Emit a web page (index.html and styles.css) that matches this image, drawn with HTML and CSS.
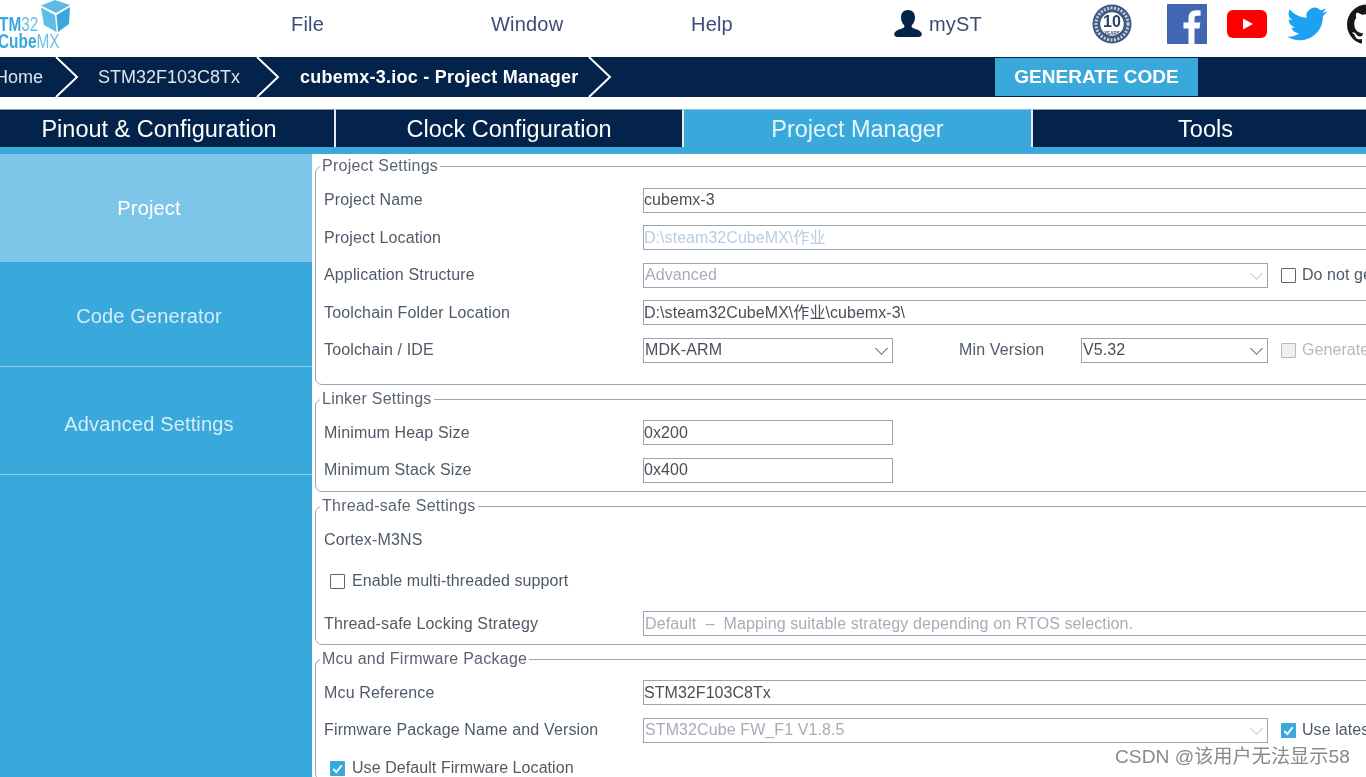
FILE: index.html
```html
<!DOCTYPE html>
<html lang="en">

<head>
    <meta charset="utf-8">
    <title>STM32CubeMX cubemx-3.ioc - Project Manager</title>
    <link rel="stylesheet" href="styles.css">
</head>

<body>
    <!--top menu-->
    <header class="topbar">
        <div class="logo">
            <div class="logo-text">
                <span class="logo-line logo-line-first"><span class="logo-bold">STM</span>32</span>
                <span class="logo-line"><span class="logo-bold">Cube</span>MX</span>
            </div>
            <svg class="logo-cube" viewBox="0 0 30 32">
                <path fill="#5dbbe6" d="M0 5.500 14 0 29 5 15 13Z" />
                <path fill="#5fbce7" d="M0 7.500 14 15 15.500 32 3 25Z" />
                <path fill="#39a9dc" d="M15.500 15 29 7 28 24 17 32Z" />
            </svg>
        </div>
        <nav class="menu">
            <a class="menu-item">File</a>
            <a class="menu-item">Window</a>
            <a class="menu-item">Help</a>
            <a class="menu-item">
                <svg class="user-icon" viewBox="0 0 28 28">
                    <path fill="#03234b" d="M14 0c4.500 0 7 3 7 7.500 0 3-1.300 6-3.200 7.800-.6 1.500.2 2.600 2.200 3.200 3.200 1 6.800 2.200 7.700 5 .6 2-1 3.500-3 3.500H3.300c-2 0-3.600-1.500-3-3.500.9-2.800 4.500-4 7.700-5 2-.6 2.800-1.700 2.200-3.200C8.300 13.500 7 10.500 7 7.500 7 3 9.500 0 14 0Z" />
                </svg>
                myST
            </a>
        </nav>
        <div class="social">
            <svg class="badge" viewBox="0 0 40 40">
                <circle cx="20" cy="20" r="19.500" fill="#3f5a80" />
                <circle cx="20" cy="20" r="16" fill="none" stroke="#c4cedb" stroke-width="3" stroke-dasharray="2 1.500" />
                <circle cx="20" cy="20" r="12.500" fill="#fff" stroke="#3f5a80" stroke-width="1.500" />
                <text class="badge-num" x="20" y="23">10</text>
                <text class="badge-small" x="20" y="31">YEARS</text>
            </svg>
            <svg class="social-icon" viewBox="0 0 40 40">
                <rect width="40" height="40" rx="1" fill="#4267b2" />
                <path fill="#fff" d="M27.500 40V24.500h5l.8-6h-5.800v-3.800c0-1.800.5-2.900 3-2.900h3.100V6.500c-.5-.1-2.400-.3-4.500-.3-4.500 0-7.600 2.700-7.600 7.800v4.500h-5v6h5V40Z" />
            </svg>
            <svg class="social-icon" viewBox="0 0 40 40">
                <rect y="6" width="40" height="28" rx="6" fill="#fe0000" />
                <path fill="#fff" d="M16 14.500 26 20l-10 5.500Z" />
            </svg>
            <svg class="social-icon" viewBox="0 0 24 24">
                <path fill="#1da1f2" d="M23.953 4.570a10 10 0 01-2.825.775 4.958 4.958 0 002.163-2.723c-.951.555-2.005.959-3.127 1.184a4.920 4.920 0 00-8.384 4.482C7.690 8.095 4.067 6.130 1.640 3.162a4.822 4.822 0 00-.666 2.475c0 1.710.870 3.213 2.188 4.096a4.904 4.904 0 01-2.228-.616v.060a4.923 4.923 0 003.946 4.827 4.996 4.996 0 01-2.212.085 4.936 4.936 0 004.604 3.417 9.867 9.867 0 01-6.102 2.105c-.390 0-.779-.023-1.170-.067a13.995 13.995 0 007.557 2.209c9.053 0 13.998-7.496 13.998-13.985 0-.210 0-.420-.015-.630A9.935 9.935 0 0024 4.590z" />
            </svg>
            <svg class="social-icon" viewBox="0 0 24 24">
                <path fill="#181616" d="M12 .297c-6.630 0-12 5.373-12 12 0 5.303 3.438 9.800 8.205 11.385.600.113.820-.258.820-.577 0-.285-.010-1.040-.015-2.040-3.338.724-4.042-1.610-4.042-1.610C4.422 18.070 3.633 17.700 3.633 17.700c-1.087-.744.084-.729.084-.729 1.205.084 1.838 1.236 1.838 1.236 1.070 1.835 2.809 1.305 3.495.998.108-.776.417-1.305.760-1.605-2.665-.300-5.466-1.332-5.466-5.930 0-1.310.465-2.380 1.235-3.220-.135-.303-.540-1.523.105-3.176 0 0 1.005-.322 3.300 1.230.960-.267 1.980-.399 3-.405 1.020.006 2.040.138 3 .405 2.280-1.552 3.285-1.230 3.285-1.230.645 1.653.240 2.873.120 3.176.765.840 1.230 1.910 1.230 3.220 0 4.610-2.805 5.625-5.475 5.920.420.360.810 1.096.810 2.220 0 1.606-.015 2.896-.015 3.286 0 .315.210.690.825.570C20.565 22.092 24 17.592 24 12.297c0-6.627-5.373-12-12-12" />
            </svg>
        </div>
    </header>

    <!--breadcrumb-->
    <div class="crumbs">
        <span class="crumb crumb-home">Home</span>
        <svg class="chevron" viewBox="0 0 24 40"><path d="M1 0 22 20 1 40" /></svg>
        <span class="crumb crumb-mcu">STM32F103C8Tx</span>
        <svg class="chevron" viewBox="0 0 24 40"><path d="M1 0 22 20 1 40" /></svg>
        <span class="crumb crumb-current">cubemx-3.ioc - Project Manager</span>
        <svg class="chevron" viewBox="0 0 24 40"><path d="M1 0 22 20 1 40" /></svg>
        <button class="generate">GENERATE CODE</button>
    </div>

    <!--main tabs-->
    <div class="tabs">
        <div class="tab tab-first">Pinout &amp; Configuration</div>
        <div class="tab tab-second">Clock Configuration</div>
        <div class="tab tab-active">Project Manager</div>
        <div class="tab tab-last">Tools</div>
    </div>
    <div class="strip"></div>

    <div class="workarea">
        <aside class="sidebar">
            <div class="side-item side-project">Project</div>
            <div class="side-item side-code">Code Generator</div>
            <div class="side-item side-advanced">Advanced Settings</div>
        </aside>

        <main class="content">
            <fieldset class="group group-project">
                <legend>Project Settings</legend>
                <div class="row">
                    <label class="name">Project Name</label>
                    <div class="field field-long">cubemx-3</div>
                </div>
                <div class="row">
                    <label class="name">Project Location</label>
                    <div class="field field-long field-path">D:\steam32CubeMX\作业</div>
                </div>
                <div class="row">
                    <label class="name">Application Structure</label>
                    <div class="field field-wide field-off field-select">Advanced<span class="arrow arrow-off"></span></div>
                    <span class="check"></span>
                    <span class="check-label">Do not generate the main()</span>
                </div>
                <div class="row">
                    <label class="name">Toolchain Folder Location</label>
                    <div class="field field-long">D:\steam32CubeMX\作业\cubemx-3\</div>
                </div>
                <div class="row">
                    <label class="name">Toolchain / IDE</label>
                    <div class="field field-short field-select">MDK-ARM<span class="arrow"></span></div>
                    <label class="name name-min">Min Version</label>
                    <div class="field field-min field-select">V5.32<span class="arrow"></span></div>
                    <span class="check check-off"></span>
                    <span class="check-label check-label-off">Generate Under Root</span>
                </div>
            </fieldset>

            <fieldset class="group group-linker">
                <legend>Linker Settings</legend>
                <div class="row">
                    <label class="name">Minimum Heap Size</label>
                    <div class="field field-short">0x200</div>
                </div>
                <div class="row">
                    <label class="name">Minimum Stack Size</label>
                    <div class="field field-short">0x400</div>
                </div>
            </fieldset>

            <fieldset class="group group-thread">
                <legend>Thread-safe Settings</legend>
                <div class="core-name">Cortex-M3NS</div>
                <div class="check-row">
                    <span class="check"></span>
                    <span class="check-label">Enable multi-threaded support</span>
                </div>
                <div class="row">
                    <label class="name">Thread-safe Locking Strategy</label>
                    <div class="field field-long field-off field-select">Default &nbsp;&#8211;&nbsp; Mapping suitable strategy depending on RTOS selection.</div>
                </div>
            </fieldset>

            <fieldset class="group group-mcu">
                <legend>Mcu and Firmware Package</legend>
                <div class="row">
                    <label class="name">Mcu Reference</label>
                    <div class="field field-long">STM32F103C8Tx</div>
                </div>
                <div class="row">
                    <label class="name">Firmware Package Name and Version</label>
                    <div class="field field-wide field-off field-select">STM32Cube FW_F1 V1.8.5<span class="arrow arrow-off"></span></div>
                    <span class="check check-on"><svg viewBox="0 0 16 16"><path d="M3.500 8.500 6.800 11.800 12.500 4.500" /></svg></span>
                    <span class="check-label">Use latest available version</span>
                </div>
                <div class="check-row check-row-last">
                    <span class="check check-on"><svg viewBox="0 0 16 16"><path d="M3.500 8.500 6.800 11.800 12.500 4.500" /></svg></span>
                    <span class="check-label">Use Default Firmware Location</span>
                </div>
            </fieldset>
        </main>
    </div>

    <!--watermark-->
    <div class="watermark">CSDN @该用户无法显示58</div>
</body>

</html>
```

FILE: styles.css
```css
html,
body {
    margin: 0;
    height: 777px;
    overflow: hidden;
    background-color: #fff;
    font-family: "Liberation Sans", "Noto Sans CJK SC", sans-serif;
}

/*the screenshot is a bit soft*/

body {
    filter: blur(.35px);
}

/*top menu*/

.topbar {
    display: flex;
    box-sizing: border-box;
    height: 57px;
    padding-bottom: 9px;
    overflow: hidden;
}

.logo {
    position: relative;
    flex: none;
    width: 291px;
}

.logo-text {
    position: absolute;
    left: -2px;
    top: 16px;
    color: #6cbfe8;
    font-size: 20px;
    line-height: 17px;
    transform: scaleX(.77);
    transform-origin: left;
    white-space: nowrap;
}

.logo-line {
    display: block;
}

.logo-line-first {
    margin-left: -12px;
}

.logo-bold {
    color: #39a9dc;
    font-weight: bold;
}

.logo-cube {
    position: absolute;
    left: 41px;
    top: 0;
    width: 30px;
    height: 32px;
}

.menu {
    display: flex;
    flex: none;
}

.menu-item {
    display: flex;
    align-items: center;
    width: 200px;
    color: #3a4d75;
    font-size: 20px;
    letter-spacing: .2px;
}

.user-icon {
    width: 28px;
    height: 28px;
    margin: 0 7px 0 3px;
}

.social {
    display: flex;
    align-items: center;
    flex: none;
    gap: 20px;
    margin-left: 1px;
}

.badge {
    flex: none;
    width: 40px;
    height: 40px;
    margin-right: 15px;
}

.badge-num {
    fill: #2c4468;
    font-size: 16px;
    font-weight: bold;
    text-anchor: middle;
}

.badge-small {
    fill: #2c4468;
    font-size: 4.500px;
    font-weight: bold;
    text-anchor: middle;
}

.social-icon {
    flex: none;
    width: 40px;
    height: 40px;
}

/*breadcrumb*/

.crumbs {
    display: flex;
    align-items: center;
    height: 40px;
    background-color: #03234b;
}

.crumb {
    flex: none;
    color: #dfe5ec;
    font-size: 18px;
}

.crumb-home {
    margin-left: -5px;
    width: 60px;
}

.crumb-mcu {
    width: 158px;
    margin-left: 19px;
}

.crumb-current {
    width: 288px;
    margin-left: 20px;
    color: #fff;
    font-weight: bold;
    letter-spacing: .25px;
}

.chevron {
    flex: none;
    width: 24px;
    height: 40px;
}

.chevron path {
    fill: none;
    stroke: #fff;
    stroke-width: 2;
}

.generate {
    flex: none;
    width: 203px;
    height: 38px;
    margin-left: 383px;
    padding: 0;
    border: 0;
    background-color: #39a9dc;
    color: #fff;
    font-family: inherit;
    font-size: 19px;
    font-weight: bold;
}

/*main tabs*/

.tabs {
    display: flex;
    height: 38px;
    margin-top: 12px;
}

.tab {
    flex: none;
    box-sizing: border-box;
    background-color: #03234b;
    border-top: 1px solid #8d9bb0;
    border-right: 2px solid #e6ebf1;
    color: #fff;
    font-size: 23.500px;
    line-height: 38px;
    text-align: center;
}

.tab-first {
    width: 336px;
    padding-right: 16px;
}

.tab-second {
    width: 348px;
}

.tab-active {
    width: 349px;
    background-color: #39a9dc;
    border-top-color: #7dc6ea;
    color: #e8f5fb;
}

.tab-last {
    width: 345px;
    border-right: 0;
}

.strip {
    height: 7px;
    background-color: #39a9dc;
}

/*left side + settings*/

.workarea {
    display: flex;
    height: 623px;
}

.sidebar {
    flex: none;
    width: 312px;
    background-color: #39a9dc;
}

.side-item {
    box-sizing: border-box;
    padding-right: 14px;
    color: #d5ecf8;
    font-size: 20px;
    letter-spacing: .15px;
    text-align: center;
}

.side-project {
    height: 108px;
    background-color: #7dc6ea;
    color: #fff;
    line-height: 109px;
}

.side-code {
    height: 105px;
    border-bottom: 1px solid #8fcfee;
    line-height: 109px;
}

.side-advanced {
    height: 108px;
    border-bottom: 1px solid #8fcfee;
    line-height: 114px;
}

.content {
    flex: 1;
    min-width: 0;
    overflow: hidden;
    padding-top: 3px;
}

/*fieldset with the title on the line*/

.group {
    box-sizing: border-box;
    width: 1200px;
    margin: 0 0 5px 3px;
    padding: 0 0 0 8px;
    border: 1px solid #9aa5b1;
    border-radius: 7px;
}

.group legend {
    margin-left: -4px;
    padding: 0 2px;
    color: #5a6472;
    font-size: 16px;
    letter-spacing: .25px;
    line-height: 18px;
}

.group-project {
    height: 228px;
    padding-top: 6.500px;
}

.group-linker {
    height: 102px;
    padding-top: 6px;
}

.group-thread {
    height: 148px;
}

.group-mcu {
    height: 130px;
    padding-top: 6px;
    border-bottom: 0;
}

.row {
    display: flex;
    align-items: center;
    height: 37.500px;
}

.name {
    flex: none;
    width: 319px;
    color: #4f5a68;
    font-size: 16px;
    letter-spacing: .15px;
}

.name-min {
    width: 122px;
    margin-left: 66px;
}

.field {
    display: flex;
    align-items: center;
    flex: none;
    box-sizing: border-box;
    height: 25px;
    padding: 0 2px 0 0;
    border: 1px solid #9aa5b1;
    color: #4a4f57;
    font-size: 16px;
    letter-spacing: .05px;
    line-height: 18px;
    white-space: pre;
}

.field-select {
    padding-left: 1px;
    letter-spacing: .1px;
}

.field-long {
    width: 800px;
}

.field-wide {
    width: 625px;
}

.field-short {
    width: 250px;
}

.field-min {
    width: 187px;
}

.field-off {
    color: #a6adb6;
}

.field-path {
    color: #b7cde4;
}

.arrow {
    flex: none;
    width: 8px;
    height: 8px;
    margin: -4px 4px 0 auto;
    border-right: 1px solid #5a6472;
    border-bottom: 1px solid #5a6472;
    transform: rotate(45deg);
}

.arrow-off {
    border-color: #c3c8ce;
}

.check {
    display: flex;
    flex: none;
    box-sizing: border-box;
    width: 15px;
    height: 15px;
    margin-left: 13px;
    border: 1px solid #5a6472;
    border-radius: 1px;
}

.check-off {
    border-color: #b4bac2;
    background-color: #eef0f2;
}

.check-on {
    border: 0;
    background-color: #39a9dc;
}

.check-on path {
    fill: none;
    stroke: #fff;
    stroke-width: 2;
}

.check-label {
    flex: none;
    margin-left: 6px;
    color: #4f5a68;
    font-size: 16px;
    letter-spacing: .07px;
    white-space: nowrap;
}

.check-label-off {
    color: #b4bac2;
}

.core-name {
    margin-top: 16px;
    color: #4f5a68;
    font-size: 16px;
    letter-spacing: .15px;
    line-height: 18px;
}

.check-row {
    display: flex;
    align-items: center;
    height: 18px;
    margin: 23px 0 15px -7px;
}

.check-row .check-label {
    margin-left: 7px;
}

.check-row-last {
    margin-top: 10px;
}

.watermark {
    position: absolute;
    left: 1115px;
    top: 746px;
    color: #8a8a8a;
    font-size: 19.200px;
    line-height: 22px;
    white-space: nowrap;
}
```
